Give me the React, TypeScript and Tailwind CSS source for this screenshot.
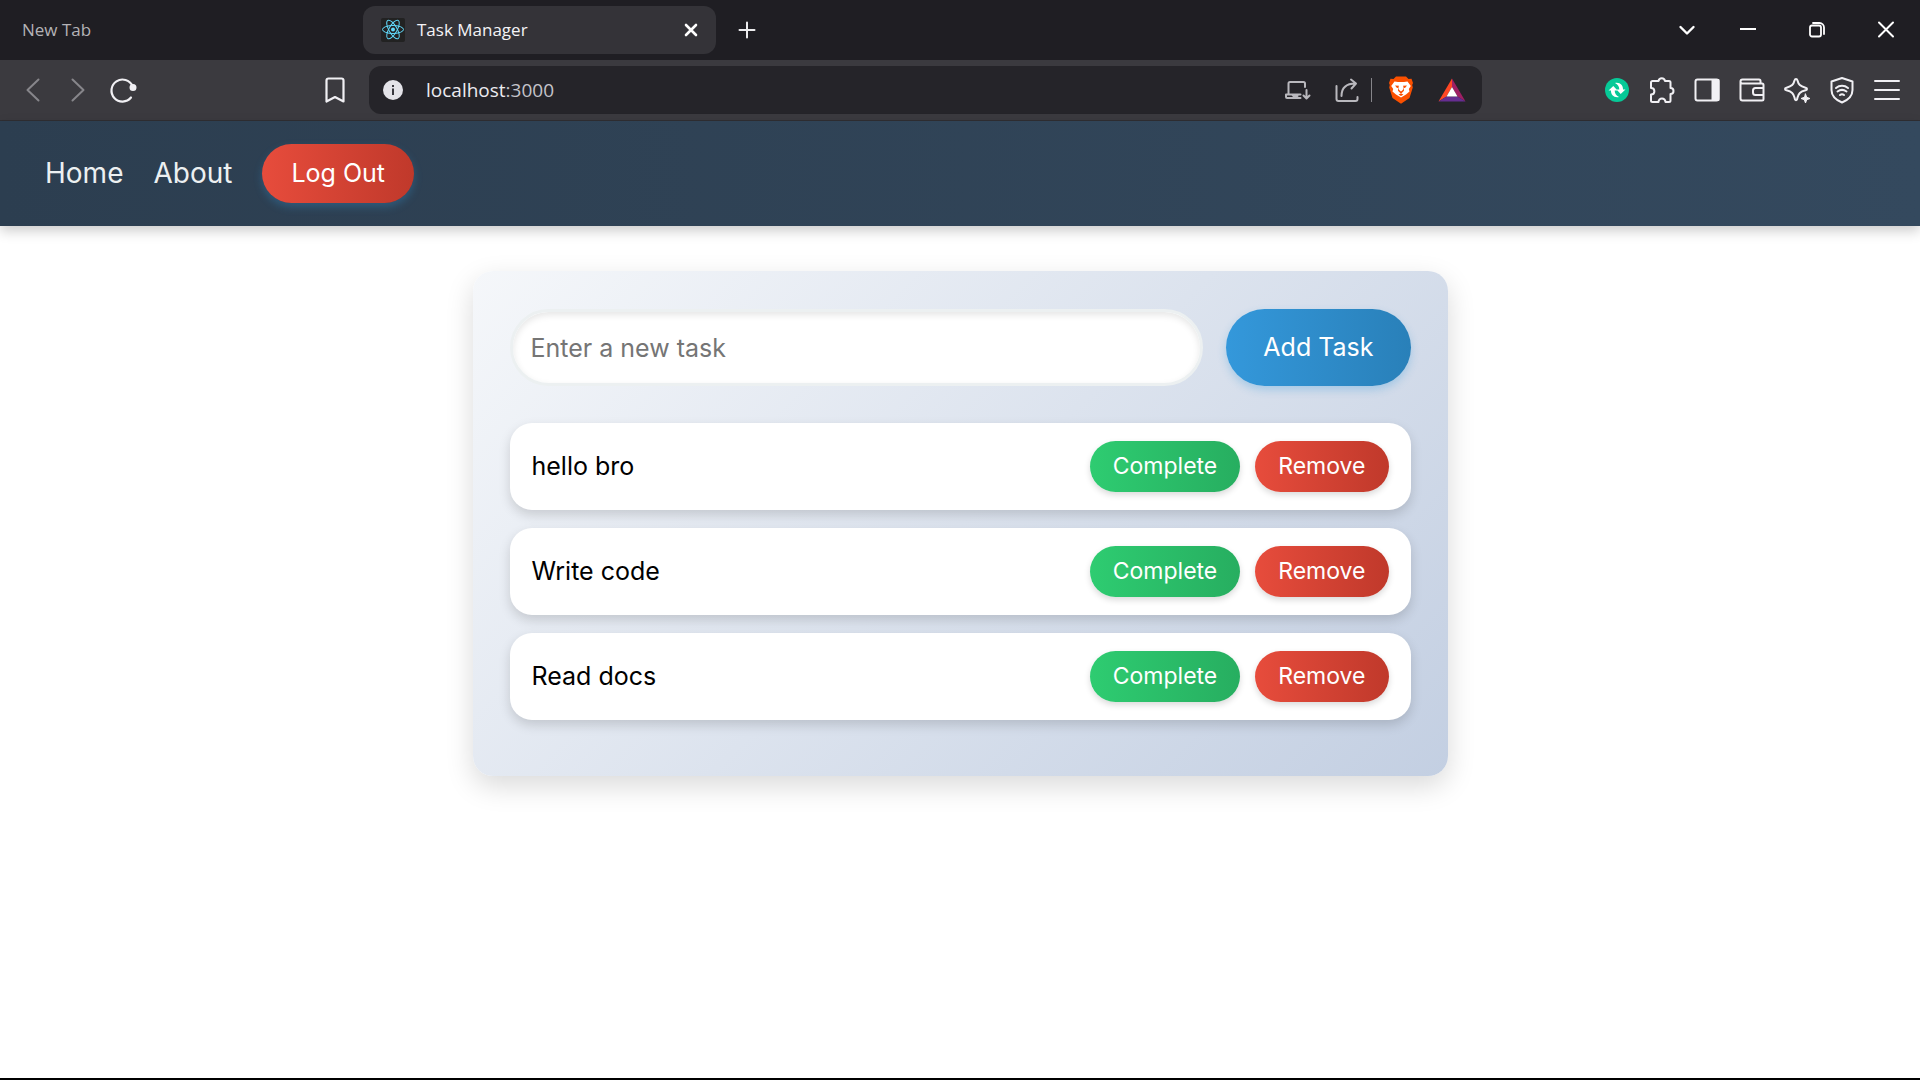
import type { ReactNode } from "react";

type IconProps = { children: ReactNode; size?: number; width?: number };

function Icon({ children, size = 28, width = 2 }: IconProps) {
  return (
    <svg
      width={size}
      height={size}
      viewBox={`0 0 ${size} ${size}`}
      fill="none"
      stroke="currentColor"
      strokeWidth={width}
      strokeLinecap="round"
      strokeLinejoin="round"
      aria-hidden="true"
    >
      {children}
    </svg>
  );
}

function ReactLogo() {
  return (
    <svg width="24" height="24" viewBox="0 0 24 24" aria-hidden="true">
      <rect width="24" height="24" rx="2" fill="#222222" />
      <g fill="none" stroke="#61dafb" strokeWidth="1">
        <ellipse cx="12" cy="11.5" rx="10.5" ry="4" />
        <ellipse cx="12" cy="11.5" rx="10.5" ry="4" transform="rotate(60 12 11.5)" />
        <ellipse cx="12" cy="11.5" rx="10.5" ry="4" transform="rotate(120 12 11.5)" />
      </g>
      <circle cx="12" cy="11.5" r="2" fill="#61dafb" />
    </svg>
  );
}

function TabStrip() {
  return (
    <div className="flex h-[60px] items-center bg-[#1f1e23]">
      <div className="flex w-[363px] items-center pl-[22px]">
        <button className="text-[17px] text-[#b4b3b6]">New Tab</button>
      </div>
      <div className="flex h-12 w-[353px] items-center rounded-xl bg-[#343338] pr-3 pl-[18px]">
        <ReactLogo />
        <span className="ml-3 flex-1 text-[17px] text-[#f4f3f6]">Task Manager</span>
        <button aria-label="Close tab" className="text-white">
          <Icon size={26} width={2.6}><path d="M8 8l10 10M18 8L8 18" /></Icon>
        </button>
      </div>
      <button aria-label="Open new tab" className="ml-[17px] text-[#ececee]">
        <Icon><path d="M14 6.5v15M6.5 14h15" /></Icon>
      </button>
      <div className="flex-1" />
      <button aria-label="Search tabs" className="flex h-full w-[52px] items-center justify-center text-white">
        <Icon width={2.4}><path d="M7.5 11l6.5 6.5 6.5-6.5" /></Icon>
      </button>
      <button aria-label="Minimize" className="flex h-full w-[69px] items-center justify-center text-white">
        <Icon><path d="M7 13h14" strokeLinecap="square" /></Icon>
      </button>
      <button aria-label="Restore" className="flex h-full w-[69px] items-center justify-center text-white">
        <Icon width={1.8}>
          <rect x="7" y="9.5" width="11" height="11" rx="2" />
          <path d="M10 7h6.5a4.5 4.5 0 0 1 4.5 4.5V18" />
        </Icon>
      </button>
      <button aria-label="Close window" className="flex h-full w-[69px] items-center justify-center text-white">
        <Icon><path d="M7 6.5l14 14M21 6.5l-14 14" /></Icon>
      </button>
    </div>
  );
}

function ToolButton({ label, children }: { label: string; children: ReactNode }) {
  return (
    <button aria-label={label} className="flex h-10 w-[45px] items-center justify-center text-[#f1f0f4]">
      {children}
    </button>
  );
}

function Toolbar() {
  return (
    <div className="flex h-[61px] items-center border-b border-[#2f2e32] bg-[#3b3a3f]">
      <div className="flex w-[369px] items-center pl-[10px] text-[#87868b]">
        <button aria-label="Back" className="flex w-[45px] justify-center">
          <Icon><path d="M19.5 3.500L8.500 14l11 10.500" /></Icon>
        </button>
        <button aria-label="Forward" className="flex w-[45px] justify-center">
          <Icon><path d="M8.5 3.5L19.5 14l-11 10.5" /></Icon>
        </button>
        <ToolButton label="Reload">
          <Icon width={2.2}>
            <path d="M22 21.5A11 11 0 1 1 23.500 10" />
            <circle cx="24" cy="11.5" r="2.4" fill="currentColor" />
          </Icon>
        </ToolButton>
        <div className="flex-1" />
        <div className="mr-3">
          <ToolButton label="Bookmark this tab">
            <Icon width={2.2}><path d="M5.500 4.500a2 2 0 0 1 2-2h13a2 2 0 0 1 2 2V25.500L14 21 5.500 25.500z" /></Icon>
          </ToolButton>
        </div>
      </div>
      <div className="flex h-12 min-w-0 flex-1 items-center rounded-xl bg-[#252429] pr-[15px] pl-[14px]">
        <svg width="20" height="20" viewBox="0 0 20 20" aria-hidden="true">
          <circle cx="10" cy="10" r="10" fill="#e4e3e8" />
          <path d="M9 8.500h2V15H9zM9 5h2v2H9z" fill="#39383d" />
        </svg>
        <div className="relative ml-[23px] min-w-0 flex-1 text-[19px]">
          <input
            aria-label="Address"
            defaultValue="localhost:3000"
            className="w-full bg-transparent text-transparent outline-none"
          />
          <span aria-hidden="true" className="pointer-events-none absolute inset-0 text-[#c4c3c9]">
            <span className="text-[#ecebf0]">localhost</span>:3000
          </span>
        </div>
        <button aria-label="Install app" className="text-[#b9b8bd]">
          <Icon>
            <path d="M5.500 18V7.500a1.500 1.500 0 0 1 1.500-1.500H20.500a1.500 1.500 0 0 1 1.500 1.500V11M17.500 22H4a1 1 0 0 1-1-1v-2.500h6l1.500 1.500h4M5.500 18.500h12M23.500 14v8M20.500 19.500l3 3 3-3" />
          </Icon>
        </button>
        <button aria-label="Share" className="ml-[22px] text-[#b9b8bd]">
          <Icon>
            <path d="M3.500 10v13a2 2 0 0 0 2 2h17a2 2 0 0 0 2-2v-2M8.500 20c0-8 5-12.500 14-12.500M18 3.500l5 4-4.500 5" />
          </Icon>
        </button>
        <div className="ml-[10px] h-6 w-px bg-[#86858a]" />
        <button aria-label="Brave Shields" className="ml-[15px] flex w-7 justify-center">
          <svg width="26" height="28" viewBox="0 0 26 28" aria-hidden="true">
            <path d="M8 .500h10l2.500 2.500 3-.300L25 7l-.800 2 .600 2.500L21.500 22 13 27.800 4.500 22 1.200 11.500l.600-2.500L1 7l1.500-4.300 3 .300z" fill="#fb5000" />
            <path d="M6.500 5.500L10 6h6l3.500-.500 3.300 4.500-2 3 .700 2.500-3.500 3L13 21.500 8 18.500l-3.500-3L5.200 13l-2-3z" fill="#fff" />
            <path d="M7 9.500l4 .200-.500 1.300.700 3L13 15.500l1.800-1.500.700-3-.500-1.300 4-.200-2 2.500-1.500-.300.500 3-3 3-3-3 .500-3-1.500.300zM10.500 18.500l2.500-1 2.500 1-2.500 1.500z" fill="#fb5000" />
          </svg>
        </button>
        <button aria-label="Brave Rewards" className="ml-[22px]">
          <svg width="30" height="28" viewBox="0 0 30 28" aria-hidden="true">
            <path d="M15 2.500L1.500 25.500l8-5L15 11z" fill="#ff4724" />
            <path d="M15 2.500l13.500 23-8-5L15 11z" fill="#9e1f63" />
            <path d="M1.500 25.500h27l-8-5h-11z" fill="#662d91" />
            <path d="M15 11l5.500 9.500h-11z" fill="#fff" />
          </svg>
        </button>
      </div>
      <div className="flex w-[438px] items-center justify-end pr-[11px]">
        <ToolButton label="Sync extension">
          <svg width="24" height="24" viewBox="0 0 24 24" aria-hidden="true">
            <circle cx="12" cy="12" r="12" fill="#06c997" />
            <path d="M10 5C15 4 18.300 7.500 18 11.500H20.500L15.700 16 11.500 11.500h2.800C14.300 8.500 13 6.500 10 5z" fill="#fff" />
            <path d="M14 19C9 20 5.700 16.500 6 12.500H3.500L8.300 8l4.200 4.500H9.700C9.700 15.500 11 17.500 14 19z" fill="#fff" />
          </svg>
        </ToolButton>
        <ToolButton label="Extensions">
          <Icon>
            <path d="M3 6.500A1.500 1.500 0 0 1 4.500 5H10.500a3.300 3.300 0 0 1 6.500 0H21a1.500 1.500 0 0 1 1.500 1.500v5.500a3 3 0 0 1 0 6V24.500a1.500 1.500 0 0 1-1.500 1.500h-3.500a3.500 3.500 0 0 0-7 0H4.500A1.500 1.500 0 0 1 3 24.500v-6c4.500 0 4.500-6.500 0-6.500z" />
          </Icon>
        </ToolButton>
        <ToolButton label="Sidebar">
          <Icon>
            <rect x="2.500" y="3.500" width="23" height="21" rx="2" />
            <path d="M19.500 4h6v20h-6z" fill="currentColor" />
          </Icon>
        </ToolButton>
        <ToolButton label="Wallet">
          <Icon>
            <path d="M22.500 7.500V5a1.500 1.500 0 0 0-1.500-1.500H4.500a2 2 0 0 0 0 4H24a1.500 1.500 0 0 1 1.500 1.500v14a1.500 1.500 0 0 1-1.500 1.500H4.500a2 2 0 0 1-2-2V5.500M25.500 12h-8a2.500 2.500 0 0 0-2.500 2.500v2a2.500 2.500 0 0 0 2.500 2.500h8" />
          </Icon>
        </ToolButton>
        <ToolButton label="Leo AI">
          <Icon>
            <path d="M13 3c.800 0 1.200.500 1.500 1.500 1 4 2.500 5.800 8 7.200 2 .500 2 2.100 0 2.600-5.500 1.400-7 3.200-8 7.200l-.500 2c-.400 1-1.600 1-2 0l-.500-2c-1-4-2.500-5.800-8-7.200-2-.500-2-2.100 0-2.600 5.500-1.400 7-3.200 8-7.200.300-1 .700-1.500 1.500-1.500z" />
            <path d="M22.500 18l1.200 3.300 3.300 1.200-3.300 1.200-1.200 3.300-1.200-3.300-3.300-1.200 3.300-1.200z" fill="currentColor" strokeWidth="1" />
          </Icon>
        </ToolButton>
        <ToolButton label="VPN">
          <Icon>
            <path d="M14 2l10.500 3.500V14c0 6-4.500 10-10.500 12.500C8 24 3.500 20 3.500 14V5.500z" />
            <path d="M8 12c3.500-3 8.500-3 12 0M9.500 15.500c2.800-2 6.200-2 9 0M12 19c1.200-1 2.800-1 4 0" />
          </Icon>
        </ToolButton>
        <ToolButton label="Menu">
          <Icon><path d="M2 5h24M2 14h24M2 23h24" /></Icon>
        </ToolButton>
      </div>
    </div>
  );
}

const tasks = ["hello bro", "Write code", "Read docs"];

function SiteNav() {
  return (
    <nav className="flex items-center gap-[30px] bg-linear-to-r from-[#2c3e50] to-[#34495e] px-[45px] py-[23px] text-[28px] leading-[39px] text-[#ecf0f1] shadow-[0_5px_12px_rgba(0,0,0,0.2)]">
      <a href="#home">Home</a>
      <a href="#about">About</a>
      <button className="rounded-full bg-linear-to-r from-[#e74c3c] to-[#c0392b] px-[29px] py-[10px] text-[25px] text-white shadow-[0_4px_8px_rgba(52,152,219,0.3)]">
        Log Out
      </button>
    </nav>
  );
}

function TaskItem({ name }: { name: string }) {
  return (
    <li className="flex items-center justify-between rounded-[22px] bg-white px-[22px] py-[18px] shadow-[0_5px_12px_rgba(0,0,0,0.15)]">
      <span className="text-[25px] text-black">{name}</span>
      <div className="flex gap-[15px] text-[23px] leading-[31px] text-white">
        <button className="rounded-full bg-linear-to-r from-[#2ecc71] to-[#27ae60] px-[23px] py-[10px] shadow-[0_3px_6px_rgba(0,0,0,0.15)]">
          Complete
        </button>
        <button className="rounded-full bg-linear-to-r from-[#e74c3c] to-[#c0392b] px-[23px] py-[10px] shadow-[0_3px_6px_rgba(0,0,0,0.15)]">
          Remove
        </button>
      </div>
    </li>
  );
}

export default function App() {
  return (
    <div className="flex min-h-screen flex-col border-b-2 border-black bg-white font-['Open_Sans',sans-serif]">
      <TabStrip />
      <Toolbar />
      <div className="font-['Inter',sans-serif]">
        <SiteNav />
        <main className="mx-auto mt-[45px] max-w-[975px] rounded-[20px] bg-[linear-gradient(135deg,#f5f7fa,#c3cfe2)] px-[37px] pt-[38px] pb-[56px] shadow-[0_10px_28px_rgba(0,0,0,0.15)]">
          <form className="flex gap-[23px] text-[25px]" onSubmit={(e) => e.preventDefault()}>
            <input
              aria-label="New task"
              placeholder="Enter a new task"
              className="h-[77px] min-w-0 flex-1 rounded-full border-[3px] border-[#ecf0f1] bg-white px-[18px] shadow-[inset_0_3px_7px_rgba(0,0,0,0.1)] outline-none placeholder:text-[#757575]"
            />
            <button className="rounded-full bg-linear-to-r from-[#3498db] to-[#2980b9] px-[37px] text-white shadow-[0_4px_9px_rgba(52,152,219,0.3)]">
              Add Task
            </button>
          </form>
          <ul className="mt-[37px] flex flex-col gap-[18px]">
            {tasks.map((name) => (
              <TaskItem key={name} name={name} />
            ))}
          </ul>
        </main>
      </div>
    </div>
  );
}
